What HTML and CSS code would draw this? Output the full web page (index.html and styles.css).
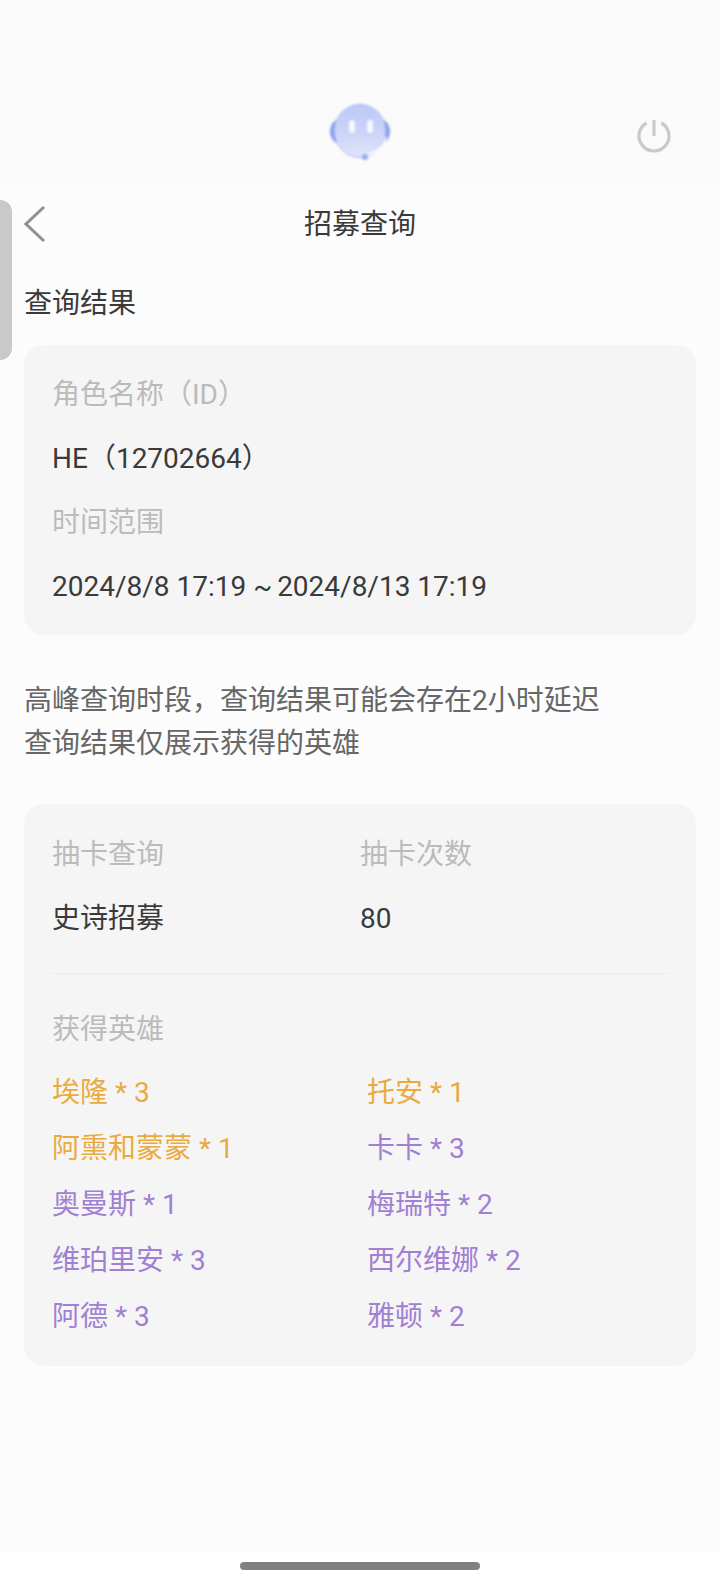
FILE: index.html
```html
<!DOCTYPE html>
<html lang="zh">
<head>
<meta charset="utf-8">
<title>招募查询</title>
<link rel="stylesheet" href="styles.css">
</head>
<body>
<div class="screen">
  <header class="top">
    <svg class="mascot" viewBox="0 0 64 60" aria-hidden="true">
      <defs>
        <linearGradient id="face" x1="0" y1="0" x2="0" y2="1">
          <stop offset="0" stop-color="#bcc8f7"/>
          <stop offset="0.55" stop-color="#ccd4f8"/>
          <stop offset="1" stop-color="#e2e5f9"/>
        </linearGradient>
      </defs>
      <path d="M8 17 C0 22 0 35 8 40Z" fill="#8fa1ec"/>
      <path d="M56 17 C64 22 64 35 56 40Z" fill="#8fa1ec"/>
      <ellipse cx="32" cy="28" rx="25.5" ry="26.5" fill="url(#face)" stroke="#a9b8f3" stroke-width="1"/>
      <rect x="21" y="17" width="6" height="13" rx="3" fill="#f6f7ff"/>
      <rect x="39" y="17" width="6" height="13" rx="3" fill="#f6f7ff"/>
      <path d="M58 34 C56 45 47 50 38 52" fill="none" stroke="#fff" stroke-width="1.6"/>
      <circle cx="37" cy="54" r="3" fill="#9aabef"/>
    </svg>
    <svg class="power" viewBox="0 0 36 36" aria-hidden="true">
      <path d="M10.5 5 A15 15 0 1 0 25.5 5" fill="none" stroke="#c9c9c9" stroke-width="3.2"/>
      <path d="M18 2 V18" fill="none" stroke="#c9c9c9" stroke-width="3"/>
    </svg>
  </header>
  <main class="content">
    <div class="tab"></div>
    <div class="nav">
      <svg class="back" viewBox="0 0 22 36" aria-hidden="true">
        <path d="M20 1 L2 18 L20 35" fill="none" stroke="#919191" stroke-width="3"/>
      </svg>
      <h1 class="title">招募查询</h1>
    </div>
    <h2 class="section">查询结果</h2>
    <section class="card info">
      <div class="label">角色名称（ID）</div>
      <div class="value">HE（12702664）</div>
      <div class="label">时间范围</div>
      <div class="value">2024/8/8 17:19 <span class="tilde">~</span> 2024/8/13 17:19</div>
    </section>
    <p class="note">高峰查询时段，查询结果可能会存在2小时延迟<br>查询结果仅展示获得的英雄</p>
    <section class="card result">
      <div class="stats">
        <div class="label">抽卡查询</div>
        <div class="label">抽卡次数</div>
        <div class="value">史诗招募</div>
        <div class="value">80</div>
      </div>
      <div class="divider"></div>
      <div class="label">获得英雄</div>
      <ul class="heroes">
        <li class="gold">埃隆 * 3</li>
        <li class="gold">托安 * 1</li>
        <li class="gold">阿熏和蒙蒙 * 1</li>
        <li class="purple">卡卡 * 3</li>
        <li class="purple">奥曼斯 * 1</li>
        <li class="purple">梅瑞特 * 2</li>
        <li class="purple">维珀里安 * 3</li>
        <li class="purple">西尔维娜 * 2</li>
        <li class="purple">阿德 * 3</li>
        <li class="purple">雅顿 * 2</li>
      </ul>
    </section>
  </main>
  <footer class="gesture"><div class="pill"></div></footer>
</div>
</body>
</html>
```

FILE: styles.css
```css
* { box-sizing: border-box; margin: 0; padding: 0; }
html, body { width: 720px; height: 1584px; overflow: hidden; background: #fff; }
body {
  font-family: Roboto, "Noto Sans CJK SC", sans-serif;
  font-size: 28px;
  font-weight: 400;
  color: #3a3a3a;
}
.screen { display: flex; flex-direction: column; height: 1584px; }
.top {
  height: 182px;
  background: #fafafa;
  position: relative;
  flex: none;
}
.mascot { position: absolute; left: 328px; top: 103px; width: 64px; height: 60px; filter: blur(0.8px); }
.power { position: absolute; left: 636px; top: 118px; width: 36px; height: 36px; filter: blur(0.4px); }
.content {
  flex: 1;
  background: #fcfcfc;
  padding: 0 24px;
  position: relative;
}
.tab {
  position: absolute;
  left: 0;
  top: 18px;
  width: 12px;
  height: 160px;
  background: #c9c9c9;
  border-radius: 0 12px 12px 0;
}
.nav {
  height: 80px;
  display: flex;
  align-items: center;
  justify-content: center;
  position: relative;
}
.back { position: absolute; left: 0; top: 24px; width: 22px; height: 36px; }
.title { font-size: 28px; font-weight: 400; color: #3a3a3a; }
.section { font-size: 28px; font-weight: 400; line-height: 40px; margin-top: 22px; color: #3a3a3a; }
.card { background: #f5f5f5; border-radius: 20px; padding: 28px; }
.info { margin-top: 21px; height: 290px; padding-top: 32px; }
.label { color: #bbb; line-height: 36px; }
.value { color: #3a3a3a; line-height: 36px; margin-top: 28px; margin-bottom: 28px; }
.info .value:last-child { margin-bottom: 0; }
.tilde { letter-spacing: -2px; }
.note { color: #666; font-size: 28px; line-height: 43px; margin-top: 44px; }
.result { margin-top: 39px; height: 562px; padding-top: 33px; }
.stats { display: grid; grid-template-columns: 308px 1fr; }
.stats .value { margin-bottom: 0; }
.divider { height: 1px; background: #ebebeb; margin: 36px 0 38px; }
.heroes {
  list-style: none;
  display: grid;
  grid-template-columns: 315px 1fr;
  grid-auto-rows: 56px;
  margin-top: 17px;
}
.heroes li { line-height: 56px; }
.gold { color: #e9aa3f; }
.purple { color: #a17fd2; }
.gesture { height: 32px; flex: none; background: #fff; padding-top: 10px; display: flex; justify-content: center; }
.pill { width: 240px; height: 8px; border-radius: 4px; background: #808080; }
```
